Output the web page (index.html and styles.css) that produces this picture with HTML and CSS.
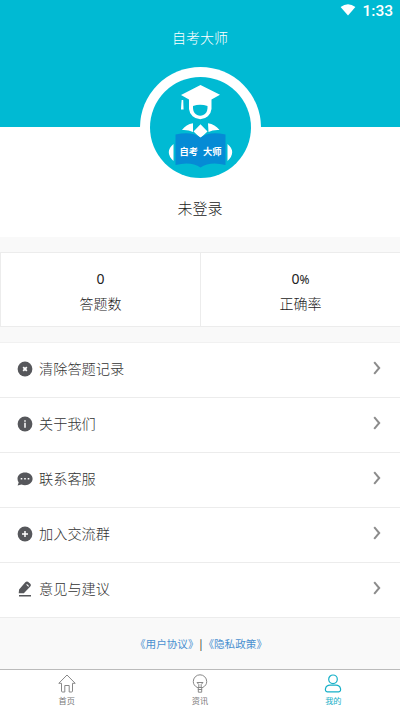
FILE: index.html
```html
<!DOCTYPE html>
<html lang="zh-CN">
<head>
<meta charset="utf-8">
<title>自考大师</title>
<link rel="stylesheet" href="styles.css">
</head>
<body>
<div class="app">
  <header class="top">
    <div class="status">
      <svg class="wifi" width="16" height="12" viewBox="0 0 16 12"><path d="M.6 3Q8-2.400 15.400 3L8 11.600z" fill="#fff"/></svg>
      <span>1:33</span>
    </div>
    <h1 class="title">自考大师</h1>
  </header>
  <section class="profile">
    <div class="avatar">
      <svg class="logo" width="101" height="101" viewBox="0 0 101 101">
        <path d="M50.500 8 70 17.800 61.500 22.500V32A11.300 11.300 0 0 1 39 32V22.500L31 18z" fill="#fff"/>
        <path d="M31.600 23h1.600l.4 9.500h-2.600z" fill="#fff"/>
        <path d="M43 29Q50 26.500 57.500 29C58 35.500 54.500 38.700 50.200 38.700S42.500 35.500 43 29z" fill="#00bad3"/>
        <path d="M32 53Q36 47.500 43 46.300V55Q38 52.500 32 53zM58 46.300Q65 47.500 69.500 53 63 52.500 58.500 55zM50.500 47.300 57.500 54.500 50.500 61 43.500 54.500z" fill="#fff"/>
        <path d="M23.500 67Q14 75 23.500 84zM77.500 67Q87 75 77.500 84z" fill="#fff"/>
        <path d="M25.500 57.500Q42 54 50.500 60.500 59 54 75.500 57.500V88Q60 84 50.500 90.500 41 84 25.500 88z" fill="#058bd5"/>
        <text class="logo-text" x="29.500" y="77.500">自考</text>
        <text class="logo-text" x="53" y="77.500">大师</text>
      </svg>
    </div>
    <div class="name">未登录</div>
  </section>
  <section class="stats">
    <div class="stat"><span class="value">0</span><span>答题数</span></div>
    <div class="stat"><span class="value">0<small>%</small></span><span>正确率</span></div>
  </section>
  <main class="list">
    <div class="row">
      <svg class="icon" viewBox="0 0 16 16"><circle cx="8" cy="8" r="7.400"/><path class="cut" d="m6.200 6.200 3.600 3.600m0-3.600-3.600 3.600"/></svg>
      <span class="label">清除答题记录</span>
      <svg class="chevron" viewBox="0 0 8 14"><path d="m1.200 1.200 5 5.800-5 5.800"/></svg>
    </div>
    <div class="row">
      <svg class="icon" viewBox="0 0 16 16"><circle cx="8" cy="8" r="7.400"/><path class="cut thin" d="M8 4.300v1.400M8 6.800v5"/></svg>
      <span class="label">关于我们</span>
      <svg class="chevron" viewBox="0 0 8 14"><path d="m1.200 1.200 5 5.800-5 5.800"/></svg>
    </div>
    <div class="row">
      <svg class="icon" viewBox="0 0 16 16"><path d="M8 1.500c4.300 0 7.600 2.700 7.600 6.300S12.300 14.200 8 14.200c-1.300 0-2.500-.2-3.500-.7L.6 14.400l1.100-3C.9 10.300.5 9.100.5 7.800.5 4.200 3.700 1.500 8 1.500z"/><path class="cut thin" d="M3.700 7.800h1.600M7.200 7.800h1.600M10.700 7.800h1.600"/></svg>
      <span class="label">联系客服</span>
      <svg class="chevron" viewBox="0 0 8 14"><path d="m1.200 1.200 5 5.800-5 5.800"/></svg>
    </div>
    <div class="row">
      <svg class="icon" viewBox="0 0 16 16"><circle cx="8" cy="8" r="7.400"/><path class="cut thin" d="M8 5v6M5 8h6"/></svg>
      <span class="label">加入交流群</span>
      <svg class="chevron" viewBox="0 0 8 14"><path d="m1.200 1.200 5 5.800-5 5.800"/></svg>
    </div>
    <div class="row">
      <svg class="icon" viewBox="0 0 16 16"><path d="M1.700 12.300 2.100 8.500 8.300 1.200Q9.700-.1 11 .8L13.300 2.700Q14.500 4 13.300 5.500L6.800 12.200zM2 13.900h12v1.500H2z"/><path class="cut pencil" d="m9.600 3.400 2.100 2"/></svg>
      <span class="label">意见与建议</span>
      <svg class="chevron" viewBox="0 0 8 14"><path d="m1.200 1.200 5 5.800-5 5.800"/></svg>
    </div>
  </main>
  <div class="legal"><a>《用户协议》</a><span class="bar">|</span><a>《隐私政策》</a></div>
  <nav class="tabs">
    <div class="tab">
      <svg width="18" height="19" viewBox="0 0 18 19"><path d="M3.500 9.300H.8L9 1l8.200 8.300h-2.700V17q0 1-1 1h-2.300v-6.500H6.800V18H4.500q-1 0-1-1z"/></svg>
      <span>首页</span>
    </div>
    <div class="tab">
      <svg width="18" height="19" viewBox="0 0 18 19"><path d="M6.300 13.500C3.500 12 2.300 10 2.300 7.500a6.700 6.700 0 0 1 13.400 0c0 2.500-1.200 4.500-4 6zM6.300 13.500h5.400M6.900 15.500h4.200M7.300 13.500v4.700h3.400v-4.700M6 8.500h6l-1.800 2v3M6 8.500l1.800 2v3"/></svg>
      <span>资讯</span>
    </div>
    <div class="tab active">
      <svg width="18" height="19" viewBox="0 0 18 19"><circle cx="9" cy="5.300" r="4.300"/><path d="M3.300 17.800c-3.300 0-2.300-6.600 2.700-6.600h6c5 0 6 6.600 2.700 6.600z"/></svg>
      <span>我的</span>
    </div>
  </nav>
</div>
</body>
</html>
```
FILE: styles.css
```css
* { box-sizing: border-box; }
body {
  margin: 0;
  background: #f9f9f9;
  font-family: "Noto Sans CJK SC", sans-serif;
  font-weight: 300;
  color: #222;
}
.app {
  width: 400px;
  height: 711px;
  display: flex;
  flex-direction: column;
  overflow: hidden;
}
.top {
  flex: none;
  height: 127px;
  background: #00bad3;
  color: #fff;
}
.status {
  height: 22px;
  display: flex;
  justify-content: flex-end;
  align-items: center;
  gap: 6px;
  padding-right: 7px;
  font: 500 15.500px/22px Roboto, sans-serif;
}
.wifi { margin-bottom: 2px; }
.title {
  margin: 0;
  padding-top: 5px;
  font-size: 14px;
  line-height: 20px;
  font-weight: 300;
  text-align: center;
}
.profile {
  flex: none;
  height: 110px;
  background: #fff;
  display: flex;
  flex-direction: column;
  align-items: center;
}
.avatar {
  flex: none;
  width: 121px;
  height: 121px;
  margin-top: -60px;
  padding: 10px;
  border-radius: 50%;
  background: #fff;
}
.logo {
  display: block;
  border-radius: 50%;
  background: #00bad3;
}
.logo-text {
  font-size: 9.300px;
  font-weight: 700;
  fill: #fff;
}
.name {
  margin-top: 8px;
  font-size: 15px;
  line-height: 24px;
}
.stats {
  flex: none;
  display: flex;
  height: 75px;
  margin-top: 15px;
  background: #fff;
  border: solid #ececec;
  border-width: 1px 0;
}
.stat {
  flex: 1;
  display: flex;
  flex-direction: column;
  align-items: center;
  padding-top: 14px;
  border-left: 1px solid #ececec;
  font-size: 14px;
  line-height: 24px;
}
.value {
  height: 24px;
  font-family: "Noto Sans", sans-serif;
  font-size: 14px;
  font-weight: 400;
}
.value small { font-size: 12px; }
.list {
  flex: none;
  margin-top: 15px;
  background: #fff;
  border-top: 1px solid #f1f1f1;
}
.row {
  display: flex;
  align-items: center;
  height: 55px;
  padding: 0 19px 4px 17px;
  border-bottom: 1px solid #ececec;
}
.icon {
  width: 16px;
  height: 16px;
  margin-top: 2px;
  fill: #56575b;
}
.cut {
  fill: none;
  stroke: #fff;
  stroke-width: 1.800;
}
.thin { stroke-width: 1.500; }
.pencil { stroke-width: 1.100; }
.label {
  flex: 1;
  margin-left: 6px;
  font-size: 14.200px;
  line-height: 20px;
  color: #333;
}
.chevron {
  width: 8px;
  height: 14px;
  fill: none;
  stroke: #8c8c8c;
  stroke-width: 2;
}
.legal {
  flex: 1;
  display: flex;
  justify-content: center;
  align-items: center;
  padding-left: 2px;
  font-size: 10.600px;
  font-weight: 400;
  color: #222;
}
.legal a { color: #4a90d0; }
.bar { margin: 0 1px; }
.tabs {
  flex: none;
  display: flex;
  height: 42px;
  background: #fff;
  border-top: 1px solid #bbb;
}
.tab {
  flex: 1;
  display: flex;
  flex-direction: column;
  align-items: center;
  padding-top: 4px;
  font-size: 8.200px;
  line-height: 15px;
  font-weight: 400;
  color: #777;
}
.tab svg {
  fill: none;
  stroke: #888;
  stroke-width: 1;
}
.active { color: #16b0c8; }
.active svg {
  stroke: #16b0c8;
  stroke-width: 1.200;
}
```
